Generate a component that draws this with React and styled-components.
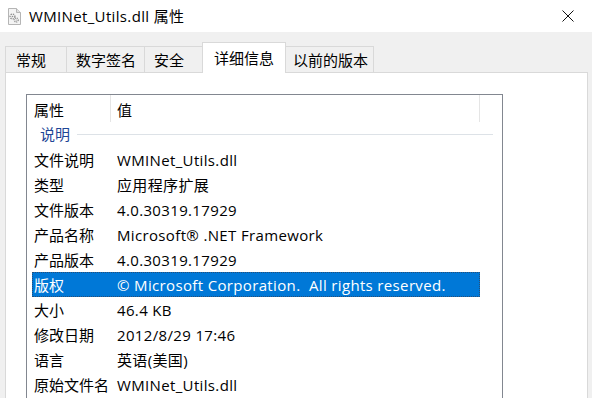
import React from "react";
import styled, { createGlobalStyle } from "styled-components";

const GlobalStyle = createGlobalStyle`
  html, body { margin: 0; padding: 0; }
  body {
    font-family: "Open Sans", "Noto Sans CJK SC", sans-serif;
    font-size: 15px;
    color: #000;
    overflow: hidden;
  }
`;

const Window = styled.div`
  width: 592px;
  height: 398px;
  display: flex;
  flex-direction: column;
  background: #f0f0f0;
  overflow: hidden;
`;

const TitleBar = styled.div`
  height: 32px;
  flex: none;
  background: #fff;
  display: flex;
  align-items: center;
  padding-left: 7px;
`;

const TitleText = styled.div`
  margin-left: 7px;
  font-size: 15px;
  line-height: 20px;
  margin-top: -1px;
  flex: 1;
  white-space: pre;
  letter-spacing: 0.35px;
`;

const CloseButton = styled.div`
  width: 46px;
  height: 32px;
  display: flex;
  align-items: center;
  justify-content: center;
  margin-right: 1px;
`;

const TabStrip = styled.div`
  height: 41px;
  flex: none;
  display: flex;
  align-items: flex-end;
  padding-left: 5px;
  position: relative;
  z-index: 1;
  margin-bottom: -1px;
`;

const Tab = styled.div`
  box-sizing: border-box;
  width: ${(p) => p.$w}px;
  height: ${(p) => (p.$active ? 31 : 27)}px;
  margin-left: ${(p) => (p.$first ? 0 : -1)}px;
  border: 1px solid #d9d9d9;
  border-bottom: ${(p) => (p.$active ? "none" : "1px solid #d9d9d9")};
  background: ${(p) => (p.$active ? "#fff" : "#f0f0f0")};
  padding-left: ${(p) => p.$pl}px;
  display: flex;
  align-items: ${(p) => (p.$active ? "flex-start" : "center")};
  padding-top: ${(p) => (p.$active ? 5 : 0)}px;
  font-size: 15px;
  line-height: 20px;
  white-space: nowrap;
  position: relative;
  z-index: ${(p) => (p.$active ? 2 : 1)};
`;

const Panel = styled.div`
  flex: 1;
  margin: 0 4px 0 5px;
  background: #fff;
  border: 1px solid #d9d9d9;
  border-bottom: none;
  padding: 21px 0 0 20px;
  overflow: hidden;
`;

const ListView = styled.div`
  width: 475px;
  height: 400px;
  border: 1px solid #828790;
  background: #fff;
  display: flex;
  flex-direction: column;
`;

const HeaderRow = styled.div`
  height: 27px;
  flex: none;
  display: flex;
`;

const HeaderCell = styled.div`
  box-sizing: border-box;
  width: ${(p) => p.$w}px;
  padding-left: ${(p) => p.$pl}px;
  border-right: ${(p) => (p.$divider ? "1px solid #e5e5e5" : "none")};
  display: flex;
  align-items: center;
  padding-top: 2px;
  line-height: 20px;
  height: 27px;
`;

const GroupRow = styled.div`
  height: 25px;
  flex: none;
  display: flex;
  align-items: center;
  padding-left: 13px;
  gap: 7px;
`;

const GroupLabel = styled.span`
  color: #1e4696;
  line-height: 20px;
  margin-top: -2px;
`;

const GroupLine = styled.div`
  width: 416px;
  height: 1px;
  background: #dde2e7;
`;

const Row = styled.div`
  box-sizing: border-box;
  height: 25px;
  flex: none;
  margin-left: 5px;
  width: 448px;
  display: flex;
  align-items: center;
  padding-left: 2px;
  background: ${(p) => (p.$selected ? "#0078d7" : "transparent")};
  color: ${(p) => (p.$selected ? "#fff" : "#000")};
  outline: ${(p) => (p.$selected ? "1px dotted #2a4f76" : "none")};
  outline-offset: -1px;
`;

const LabelCell = styled.div`
  width: 83px;
  flex: none;
  line-height: 20px;
  white-space: nowrap;
`;

const ValueCell = styled.div`
  flex: 1;
  line-height: 20px;
  white-space: pre;
  letter-spacing: 0.35px;
`;

const FileIcon = () => (
  <svg width="15" height="17" viewBox="0 0 15 17">
    <path d="M1.5 0.5 H9.5 L13.5 4.5 V16.5 H1.5 Z" fill="#f4f4f4" stroke="#b5b5b5" />
    <path d="M9.5 0.5 V4.5 H13.5" fill="#e0e0e0" stroke="#b5b5b5" />
    <circle cx="5.5" cy="8.5" r="2.4" fill="none" stroke="#8c8c8c" strokeWidth="1.4" strokeDasharray="1.2 0.9" />
    <circle cx="5.5" cy="8.5" r="0.8" fill="#8c8c8c" />
    <circle cx="9.2" cy="12" r="2" fill="none" stroke="#8c8c8c" strokeWidth="1.3" strokeDasharray="1 0.8" />
    <circle cx="9.2" cy="12" r="0.6" fill="#8c8c8c" />
  </svg>
);

const CloseIcon = () => (
  <svg width="12" height="12" viewBox="0 0 12 12">
    <path d="M0.5 0.5 L11.5 11.5 M11.5 0.5 L0.5 11.5" stroke="#111" strokeWidth="1" />
  </svg>
);

const tabs = [
  { label: "常规", w: 62, pl: 10 },
  { label: "数字签名", w: 79, pl: 9 },
  { label: "安全", w: 59, pl: 9 },
  { label: "详细信息", w: 84, pl: 11, active: true },
  { label: "以前的版本", w: 89, pl: 7 },
];

const rows = [
  ["文件说明", "WMINet_Utils.dll"],
  ["类型", "应用程序扩展"],
  ["文件版本", "4.0.30319.17929"],
  ["产品名称", "Microsoft® .NET Framework"],
  ["产品版本", "4.0.30319.17929"],
  ["版权", "© Microsoft Corporation.  All rights reserved.", true],
  ["大小", "46.4 KB"],
  ["修改日期", "2012/8/29 17:46"],
  ["语言", "英语(美国)"],
  ["原始文件名", "WMINet_Utils.dll"],
];

export default function App() {
  return (
    <>
      <GlobalStyle />
      <Window>
        <TitleBar>
          <FileIcon />
          <TitleText>WMINet_Utils.dll 属性</TitleText>
          <CloseButton>
            <CloseIcon />
          </CloseButton>
        </TitleBar>
        <TabStrip>
          {tabs.map((t, i) => (
            <Tab key={t.label} $w={t.w} $pl={t.pl} $active={t.active} $first={i === 0}>
              {t.label}
            </Tab>
          ))}
        </TabStrip>
        <Panel>
          <ListView>
            <HeaderRow>
              <HeaderCell $w={84} $pl={7} $divider>属性</HeaderCell>
              <HeaderCell $w={369} $pl={6} $divider>值</HeaderCell>
            </HeaderRow>
            <GroupRow>
              <GroupLabel>说明</GroupLabel>
              <GroupLine />
            </GroupRow>
            {rows.map(([k, v, sel]) => (
              <Row key={k} $selected={sel}>
                <LabelCell>{k}</LabelCell>
                <ValueCell>{v}</ValueCell>
              </Row>
            ))}
          </ListView>
        </Panel>
      </Window>
    </>
  );
}
